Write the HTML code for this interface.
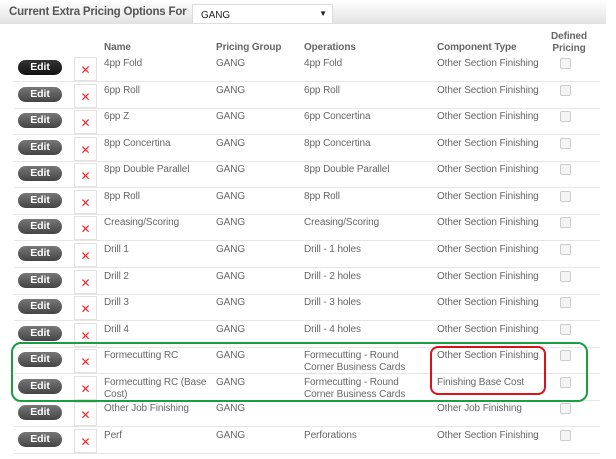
<!DOCTYPE html>
<html><head><meta charset="utf-8"><style>
body{margin:0;width:616px;height:459px;background:#fff;font-family:"Liberation Sans",Arial,sans-serif;font-size:10px;letter-spacing:-0.1px;color:#666;position:relative;overflow:hidden}
.bar{position:absolute;left:0;top:0;width:606px;height:24px;background:linear-gradient(#fff,#e2e2e2)}
.title{position:absolute;left:9px;top:6px;font-size:11.5px;font-weight:bold;color:#555;letter-spacing:-0.2px}
.sel{position:absolute;left:192px;top:4px;width:141px;height:20px;background:#fff;border:1px solid #ddd;box-sizing:border-box;font-size:10px;color:#222;padding:5px 0 0 8px}
.sel span{position:absolute;right:5px;top:4px;font-size:8px}
.h{position:absolute;font-weight:bold;color:#666}
.row{position:absolute;left:14px;width:586px;height:26px;border-bottom:1px solid #e6e6e6}
.row div{position:absolute;top:3px;line-height:12px}
.edit{left:4px!important;top:5px!important;width:44px;height:15px;border-radius:8px;background:linear-gradient(#777,#444);color:#fff;font-weight:bold;text-align:center;line-height:15px!important;font-size:10.5px}
.del{left:60px!important;top:2px!important;width:21px;height:22px;border:1px solid #e2e2e2;background:#fff;color:#e22;text-align:center;font-size:12px;line-height:24px!important}
.cb{left:546px!important;top:3px!important;width:9px;height:9px;border:1px solid #ccc;border-radius:2px;background:#f4f4f4}
</style></head><body>
<div class="bar"></div>
<div class="title">Current Extra Pricing Options For</div>
<div class="sel">GANG<span>▼</span></div>
<div class="h" style="left:104px;top:42px">Name</div>
<div class="h" style="left:216px;top:42px">Pricing Group</div>
<div class="h" style="left:304px;top:42px">Operations</div>
<div class="h" style="left:437px;top:42px">Component Type</div>
<div class="h" style="left:551px;top:31px;text-align:center;line-height:12px">Defined<br>Pricing</div>

<div class="row" style="top:55px"><div class="edit" style="background:linear-gradient(#333,#111)">Edit</div><div class="del">✕</div><div style="left:90px">4pp Fold</div><div style="left:202px">GANG</div><div style="left:290px">4pp Fold</div><div style="left:423px">Other Section Finishing</div><div class="cb"></div></div>
<div class="row" style="top:81.6px"><div class="edit">Edit</div><div class="del">✕</div><div style="left:90px">6pp Roll</div><div style="left:202px">GANG</div><div style="left:290px">6pp Roll</div><div style="left:423px">Other Section Finishing</div><div class="cb"></div></div>
<div class="row" style="top:108.1px"><div class="edit">Edit</div><div class="del">✕</div><div style="left:90px">6pp Z</div><div style="left:202px">GANG</div><div style="left:290px">6pp Concertina</div><div style="left:423px">Other Section Finishing</div><div class="cb"></div></div>
<div class="row" style="top:134.7px"><div class="edit">Edit</div><div class="del">✕</div><div style="left:90px">8pp Concertina</div><div style="left:202px">GANG</div><div style="left:290px">8pp Concertina</div><div style="left:423px">Other Section Finishing</div><div class="cb"></div></div>
<div class="row" style="top:161.3px"><div class="edit">Edit</div><div class="del">✕</div><div style="left:90px">8pp Double Parallel</div><div style="left:202px">GANG</div><div style="left:290px">8pp Double Parallel</div><div style="left:423px">Other Section Finishing</div><div class="cb"></div></div>
<div class="row" style="top:187.8px"><div class="edit">Edit</div><div class="del">✕</div><div style="left:90px">8pp Roll</div><div style="left:202px">GANG</div><div style="left:290px">8pp Roll</div><div style="left:423px">Other Section Finishing</div><div class="cb"></div></div>
<div class="row" style="top:214.4px"><div class="edit">Edit</div><div class="del">✕</div><div style="left:90px">Creasing/Scoring</div><div style="left:202px">GANG</div><div style="left:290px">Creasing/Scoring</div><div style="left:423px">Other Section Finishing</div><div class="cb"></div></div>
<div class="row" style="top:241px"><div class="edit">Edit</div><div class="del">✕</div><div style="left:90px">Drill 1</div><div style="left:202px">GANG</div><div style="left:290px">Drill - 1 holes</div><div style="left:423px">Other Section Finishing</div><div class="cb"></div></div>
<div class="row" style="top:267.5px"><div class="edit">Edit</div><div class="del">✕</div><div style="left:90px">Drill 2</div><div style="left:202px">GANG</div><div style="left:290px">Drill - 2 holes</div><div style="left:423px">Other Section Finishing</div><div class="cb"></div></div>
<div class="row" style="top:294.1px"><div class="edit">Edit</div><div class="del">✕</div><div style="left:90px">Drill 3</div><div style="left:202px">GANG</div><div style="left:290px">Drill - 3 holes</div><div style="left:423px">Other Section Finishing</div><div class="cb"></div></div>
<div class="row" style="top:320.7px"><div class="edit">Edit</div><div class="del">✕</div><div style="left:90px">Drill 4</div><div style="left:202px">GANG</div><div style="left:290px">Drill - 4 holes</div><div style="left:423px">Other Section Finishing</div><div class="cb"></div></div>
<div class="row" style="top:347.2px"><div class="edit">Edit</div><div class="del">✕</div><div style="left:90px">Formecutting RC</div><div style="left:202px">GANG</div><div style="left:290px">Formecutting - Round<br>Corner Business Cards</div><div style="left:423px">Other Section Finishing</div><div class="cb"></div></div>
<div class="row" style="top:373.8px"><div class="edit">Edit</div><div class="del">✕</div><div style="left:90px">Formecutting RC (Base<br>Cost)</div><div style="left:202px">GANG</div><div style="left:290px">Formecutting - Round<br>Corner Business Cards</div><div style="left:423px">Finishing Base Cost</div><div class="cb"></div></div>
<div class="row" style="top:400.4px"><div class="edit">Edit</div><div class="del">✕</div><div style="left:90px">Other Job Finishing</div><div style="left:202px">GANG</div><div style="left:423px">Other Job Finishing</div><div class="cb"></div></div>
<div class="row" style="top:426.9px"><div class="edit">Edit</div><div class="del">✕</div><div style="left:90px">Perf</div><div style="left:202px">GANG</div><div style="left:290px">Perforations</div><div style="left:423px">Other Section Finishing</div><div class="cb"></div></div>

<div style="position:absolute;left:11px;top:342px;width:573px;height:56px;border:2px solid #1a9e3e;border-radius:10px"></div>
<div style="position:absolute;left:430px;top:346px;width:112px;height:45px;border:2px solid #e0101a;border-radius:8px"></div>
</body></html>
